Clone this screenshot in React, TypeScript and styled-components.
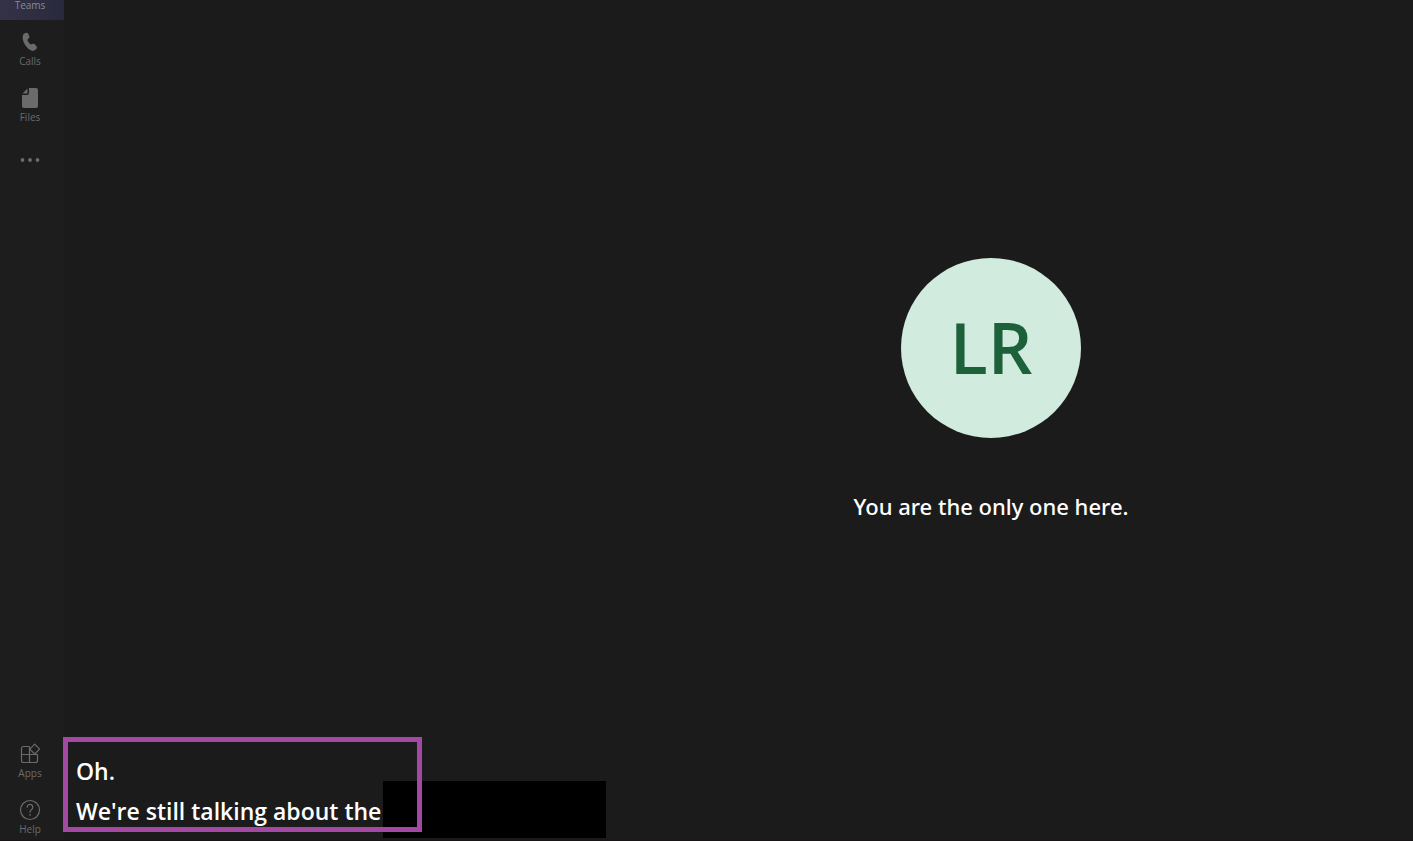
import React from "react";
import styled, { createGlobalStyle } from "styled-components";

const GlobalStyle = createGlobalStyle`
  *, *::before, *::after { box-sizing: border-box; }
  body {
    margin: 0;
    background: #1b1b1b;
    color: #ffffff;
    font-family: "Open Sans", "Noto Sans", sans-serif;
  }
`;

const Shell = styled.div`
  display: grid;
  grid-template-columns: 64px 1fr;
  height: 100vh;
  overflow: hidden;
  border-bottom: 1px solid #191416;
`;

const Rail = styled.nav`
  display: flex;
  flex-direction: column;
  justify-content: space-between;
  background: #1d1d1d;
`;

const RailGroup = styled.div`
  display: flex;
  flex-direction: column;
`;

const RailButton = styled.button<{ $active?: boolean; $iconOnly?: boolean; $height?: number }>`
  display: flex;
  flex-direction: column;
  align-items: center;
  justify-content: ${(p) => (p.$iconOnly ? "center" : "flex-start")};
  gap: 1px;
  width: 100%;
  height: ${(p) => p.$height ?? 56}px;
  padding: ${(p) => (p.$active || p.$iconOnly ? "0" : "11px")} 4px 0 0;
  border: 0;
  background: ${(p) => (p.$active ? "linear-gradient(90deg, #343247, #29293c)" : "transparent")};
  color: ${(p) => (p.$active ? "#8b8a92" : "#6b6b6b")};
  font: inherit;
  font-size: 10px;
  line-height: ${(p) => (p.$active ? "10px" : "14px")};
  cursor: pointer;

  svg {
    display: block;
    flex: none;
  }
`;

const RailLabel = styled.span``;

const Stage = styled.main`
  display: grid;
  grid-template-columns: 505px 1fr;
  grid-template-rows: 1fr auto;
  background: #1b1b1b;
`;

const Participant = styled.section`
  grid-column: 2;
  display: flex;
  flex-direction: column;
  align-items: center;
  gap: 48px;
  padding-top: 258px;
`;

const Avatar = styled.div`
  display: flex;
  align-items: center;
  justify-content: center;
  width: 180px;
  height: 180px;
  padding-bottom: 2px;
  border-radius: 50%;
  background: #d1ebde;
  color: #1d613b;
  font-size: 70px;
  font-weight: 600;
  line-height: 96px;
`;

const Message = styled.p`
  margin: 0;
  font-family: "Noto Sans", "Open Sans", sans-serif;
  font-size: 22px;
  font-weight: 500;
  line-height: 40px;
  white-space: nowrap;
`;

const Captions = styled.section`
  position: relative;
  grid-column: 1 / -1;
  padding: 0 12px 9px;
`;

const CaptionLine = styled.p`
  margin: 0;
  font-size: 23px;
  font-weight: 600;
  line-height: 40px;
  white-space: nowrap;
`;

const Redaction = styled.div`
  position: absolute;
  left: 319px;
  bottom: 2px;
  width: 223px;
  height: 57px;
  background: #000000;
`;

const Highlight = styled.div`
  position: absolute;
  left: -1px;
  bottom: 8px;
  width: 359px;
  height: 95px;
  border: 5px solid #a349a4;
`;

const CallsIcon = () => (
  <svg width="22" height="22" viewBox="0 0 22 22" fill="currentColor" aria-hidden="true">
    <path d="M5.600 2.300 7.100 1.900c.9-.3 1.800.2 2.200 1l1 2.300c.3.8.1 1.600-.5 2.100L8.300 8.700c.5 1.700 1.800 3.500 3.400 4.700l2.200-.7c.8-.2 1.600 0 2.100.7l1.600 2.100c.5.700.5 1.600-.1 2.200l-1 1c-1.100 1.100-2.700 1.500-4.200.9C8.300 18 4.200 12.400 3.700 7.500c-.2-2.100.4-4.600 1.900-5.200Z" />
  </svg>
);

const FilesIcon = () => (
  <svg width="22" height="22" viewBox="0 0 22 22" fill="currentColor" aria-hidden="true">
    <path d="M10 1h7a2 2 0 0 1 2 2v16a2 2 0 0 1-2 2H5a2 2 0 0 1-2-2V8h5a2 2 0 0 0 2-2Z" />
    <path d="M8.500 1.500V6a.5.5 0 0 1-.5.5H3.500Z" />
  </svg>
);

const MoreIcon = () => (
  <svg width="22" height="22" viewBox="0 0 22 22" fill="currentColor" aria-hidden="true">
    <circle cx="3.500" cy="11" r="1.900" />
    <circle cx="11" cy="11" r="1.900" />
    <circle cx="18.500" cy="11" r="1.900" />
  </svg>
);

const AppsIcon = () => (
  <svg width="22" height="22" viewBox="0 0 22 22" fill="none" stroke="currentColor" strokeWidth="1.200" strokeLinejoin="round" aria-hidden="true">
    <path d="M10.500 3.500h-6a2 2 0 0 0-2 2v12a2 2 0 0 0 2 2h12a2 2 0 0 0 2-2v-6H2.500M10.500 3.500v16" />
    <path d="m15.700 1.200 4.900 4.900-4.900 4.900-4.900-4.900Z" />
  </svg>
);

const HelpIcon = () => (
  <svg width="22" height="22" viewBox="0 0 22 22" fill="none" stroke="currentColor" strokeWidth="1.200" strokeLinecap="round" aria-hidden="true">
    <circle cx="11" cy="11" r="9.500" />
    <path d="M8.200 8.200a2.800 2.800 0 1 1 4.500 2.200c-1 .8-1.700 1.400-1.700 2.800" />
    <circle cx="11" cy="15.900" r=".8" fill="currentColor" stroke="none" />
  </svg>
);

export default function App() {
  return (
    <>
      <GlobalStyle />
      <Shell>
        <Rail aria-label="Main">
          <RailGroup>
            <RailButton $active $height={20}>
              <RailLabel>Teams</RailLabel>
            </RailButton>
            <RailButton>
              <CallsIcon />
              <RailLabel>Calls</RailLabel>
            </RailButton>
            <RailButton>
              <FilesIcon />
              <RailLabel>Files</RailLabel>
            </RailButton>
            <RailButton $iconOnly aria-label="More apps">
              <MoreIcon />
            </RailButton>
          </RailGroup>
          <RailGroup>
            <RailButton>
              <AppsIcon />
              <RailLabel>Apps</RailLabel>
            </RailButton>
            <RailButton $height={52}>
              <HelpIcon />
              <RailLabel>Help</RailLabel>
            </RailButton>
          </RailGroup>
        </Rail>
        <Stage>
          <Participant>
            <Avatar>LR</Avatar>
            <Message>You are the only one here.</Message>
          </Participant>
          <Captions aria-label="Live captions">
            <CaptionLine>Oh.</CaptionLine>
            <CaptionLine>We're still talking about the</CaptionLine>
            <Redaction />
            <Highlight />
          </Captions>
        </Stage>
      </Shell>
    </>
  );
}
